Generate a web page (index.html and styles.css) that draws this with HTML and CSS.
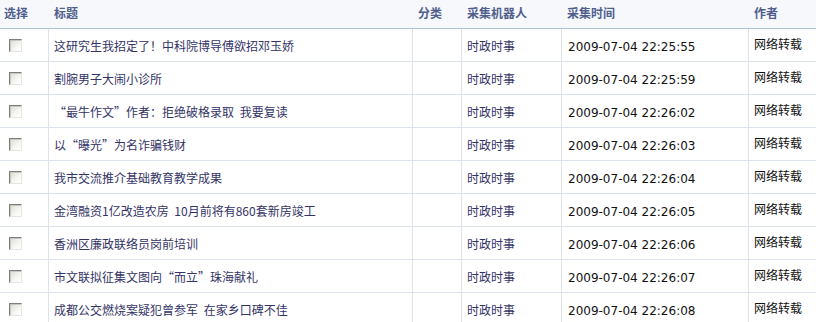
FILE: index.html
```html
<!DOCTYPE html>
<html lang="zh-CN">
<head>
<meta charset="utf-8">
<title>采集列表</title>
<link rel="stylesheet" href="styles.css">
</head>
<body>
<div class="grid">
  <div class="hd c1">选择</div>
  <div class="hd c2">标题</div>
  <div class="hd c3">分类</div>
  <div class="hd c4">采集机器人</div>
  <div class="hd c5">采集时间</div>
  <div class="hd c6">作者</div>

  <div class="cell c1"><input type="checkbox" class="cb"></div>
  <div class="cell c2 title">这研究生我招定了！中科院博导傅欲招邓玉娇</div>
  <div class="cell c3"></div>
  <div class="cell c4 cat">时政时事</div>
  <div class="cell c5 time">2009-07-04 22:25:55</div>
  <div class="cell c6 author">网络转载</div>

  <div class="cell c1"><input type="checkbox" class="cb"></div>
  <div class="cell c2 title">割腕男子大闹小诊所</div>
  <div class="cell c3"></div>
  <div class="cell c4 cat">时政时事</div>
  <div class="cell c5 time">2009-07-04 22:25:59</div>
  <div class="cell c6 author">网络转载</div>

  <div class="cell c1"><input type="checkbox" class="cb"></div>
  <div class="cell c2 title">“最牛作文”作者：拒绝破格录取 我要复读</div>
  <div class="cell c3"></div>
  <div class="cell c4 cat">时政时事</div>
  <div class="cell c5 time">2009-07-04 22:26:02</div>
  <div class="cell c6 author">网络转载</div>

  <div class="cell c1"><input type="checkbox" class="cb"></div>
  <div class="cell c2 title">以“曝光”为名诈骗钱财</div>
  <div class="cell c3"></div>
  <div class="cell c4 cat">时政时事</div>
  <div class="cell c5 time">2009-07-04 22:26:03</div>
  <div class="cell c6 author">网络转载</div>

  <div class="cell c1"><input type="checkbox" class="cb"></div>
  <div class="cell c2 title">我市交流推介基础教育教学成果</div>
  <div class="cell c3"></div>
  <div class="cell c4 cat">时政时事</div>
  <div class="cell c5 time">2009-07-04 22:26:04</div>
  <div class="cell c6 author">网络转载</div>

  <div class="cell c1"><input type="checkbox" class="cb"></div>
  <div class="cell c2 title">金湾融资1亿改造农房 10月前将有860套新房竣工</div>
  <div class="cell c3"></div>
  <div class="cell c4 cat">时政时事</div>
  <div class="cell c5 time">2009-07-04 22:26:05</div>
  <div class="cell c6 author">网络转载</div>

  <div class="cell c1"><input type="checkbox" class="cb"></div>
  <div class="cell c2 title">香洲区廉政联络员岗前培训</div>
  <div class="cell c3"></div>
  <div class="cell c4 cat">时政时事</div>
  <div class="cell c5 time">2009-07-04 22:26:06</div>
  <div class="cell c6 author">网络转载</div>

  <div class="cell c1"><input type="checkbox" class="cb"></div>
  <div class="cell c2 title">市文联拟征集文图向“而立”珠海献礼</div>
  <div class="cell c3"></div>
  <div class="cell c4 cat">时政时事</div>
  <div class="cell c5 time">2009-07-04 22:26:07</div>
  <div class="cell c6 author">网络转载</div>

  <div class="cell c1"><input type="checkbox" class="cb"></div>
  <div class="cell c2 title">成都公交燃烧案疑犯曾参军 在家乡口碑不佳</div>
  <div class="cell c3"></div>
  <div class="cell c4 cat">时政时事</div>
  <div class="cell c5 time">2009-07-04 22:26:08</div>
  <div class="cell c6 author">网络转载</div>
</div>
</body>
</html>
```

FILE: styles.css
```css
html, body {
  margin: 0;
  padding: 0;
  background: #ffffff;
}

body {
  font-family: "Noto Sans CJK SC", "Liberation Sans", sans-serif;
  font-size: 12px;
  color: #333366;
}

.grid {
  display: grid;
  width: 816px;
  grid-template-columns: 49px 364px 49px 100px 187px 67px;
  grid-template-rows: 29px;
  grid-auto-rows: 33px;
}

.hd {
  box-sizing: border-box;
  height: 29px;
  background: #f6f8fc;
  border-bottom: 1px solid #a9c3da;
  font-weight: bold;
  color: #505e8c;
  display: flex;
  align-items: center;
  padding-bottom: 3px;
  padding-left: 5px;
}

.hd.c1 { padding-left: 4px; }

.cell {
  box-sizing: border-box;
  border-bottom: 1px solid #dde3ee;
  border-right: 1px solid #dde3ee;
  display: flex;
  align-items: center;
  padding-left: 5px;
}

.cell.c6 {
  border-right: none;
}

.cell.c1 { padding-left: 9px; }
.cell.c5 { padding-left: 6px; }

.title {
  color: #333366;
  white-space: nowrap;
  overflow: hidden;
  word-spacing: 3px;
}

.cat {
  color: #333366;
}

.time {
  font-family: "DejaVu Sans", Verdana, sans-serif;
  font-size: 12px;
  color: #111111;
  padding-top: 4px;
}

.author {
  color: #111111;
  padding-bottom: 3px;
}

.cb {
  appearance: none;
  -webkit-appearance: none;
  margin: 0;
  width: 13px;
  height: 13px;
  box-sizing: border-box;
  border-top: 1px solid #7d7d7d;
  border-left: 1px solid #7d7d7d;
  border-right: 1px solid #e6e6e0;
  border-bottom: 1px solid #e6e6e0;
  background: linear-gradient(135deg, #dcdcd4 0%, #f6f6f2 60%, #ffffff 100%);
  box-shadow: inset 1px 1px 0 #c8c8c0;
}
```
